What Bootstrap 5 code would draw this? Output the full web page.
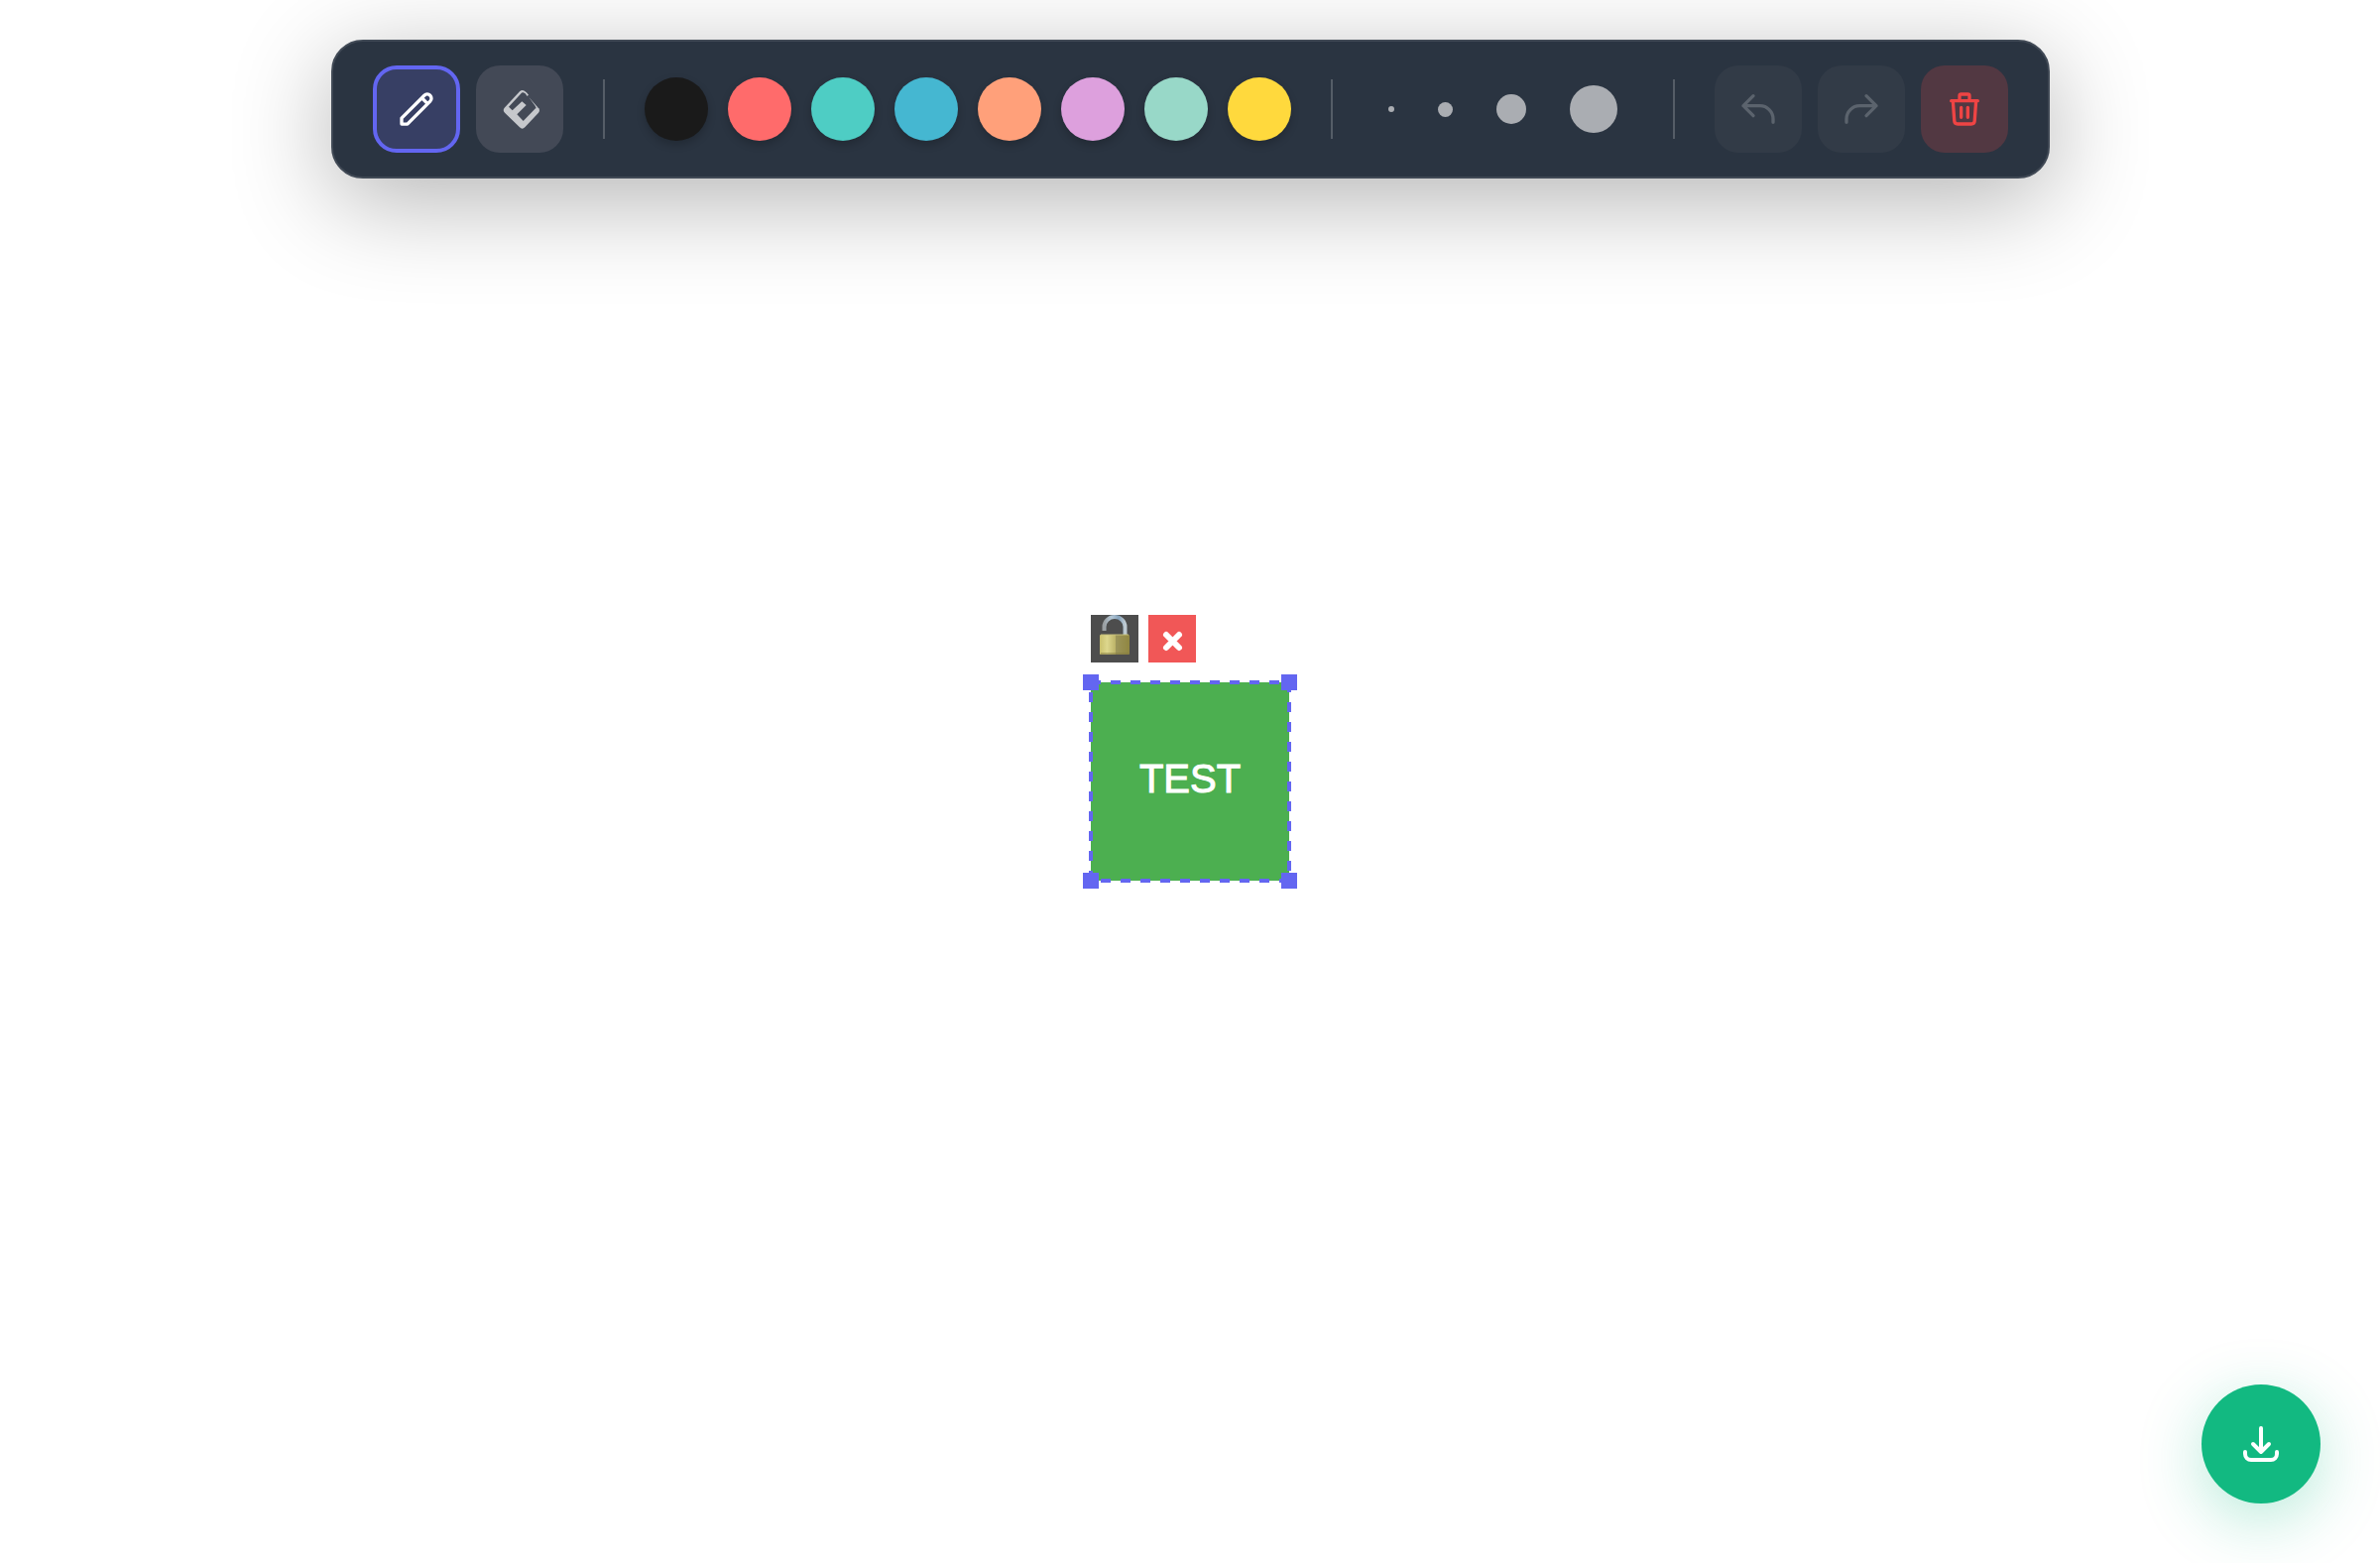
<!DOCTYPE html>
<html lang="en">
<head>
<meta charset="utf-8">
<meta name="viewport" content="width=device-width, initial-scale=1">
<title>Drawing board</title>
<link href="https://cdn.jsdelivr.net/npm/bootstrap@5.3.0/dist/css/bootstrap.min.css" rel="stylesheet">
<style>
  body { font-family: "Liberation Sans", Arial, sans-serif; background: #fff; }
  .toolbox {
    padding: 24px 40px; gap: 40px; border-radius: 32px;
    background: #2a3441; border: 2px solid #404955;
    box-shadow: 0 22px 100px rgba(0, 0, 0, .3);
  }
  .toolbox .sep { width: 2px; height: 60px; background: #555d67; }
  .tools { gap: 16px; }
  .tool {
    width: 88px; height: 88px; padding: 0; border: 0; border-radius: 24px;
    background: #434956; color: #c6c8cc;
  }
  .tool svg { width: 40px; height: 40px; }
  .tool.active { background: #373f64; border: 4px solid #6366f1; color: #fff; }
  .tool:disabled { background: #323b47; color: #5b636d; }
  .tool.danger { background: #523842; color: #ef4444; }
  .swatches { gap: 20px; }
  .swatch {
    width: 64px; height: 64px; padding: 0; border: 0; border-radius: 50%;
    box-shadow: 0 4px 8px rgba(0, 0, 0, .2);
  }
  .sizes { gap: 12px; }
  .size { padding: 16px; border: 0; background: none; }
  .size span { display: block; border-radius: 50%; background: #aaadb2; }
  .s-xs { width: 6px; height: 6px; }
  .s-sm { width: 15px; height: 15px; }
  .s-md { width: 30px; height: 30px; }
  .s-lg { width: 48px; height: 48px; }
  .board-item {
    width: 200px; height: 200px; padding-bottom: 6px; background: #4caf50; color: #fff;
    font-size: 40px; line-height: 48px; -webkit-text-stroke: 1px #fff;
  }
  .outline-layer { position: absolute; left: 0; top: 0; width: 100%; height: 100%; overflow: visible; }
  .item-actions { position: absolute; left: 0; bottom: 220px; gap: 10px; }
  .item-actions button { width: 48px; height: 48px; padding: 0; border: 0; }
  .item-actions svg { display: block; width: 48px; height: 48px; }
  .lock-btn { background: #4d4d4d; }
  .remove-btn { background: #f15757; }
  .save-btn {
    right: 60px; bottom: 60px; width: 120px; height: 120px; padding: 0; border: 0;
    background: #12b981; color: #fff; box-shadow: 0 16px 64px rgba(16, 185, 129, .3);
  }
  .save-btn svg { width: 48px; height: 48px; }
  .line-icon { fill: none; stroke: currentColor; stroke-width: 2; stroke-linecap: round; stroke-linejoin: round; }
</style>
</head>
<body class="vh-100 overflow-hidden">

<header class="fixed-top d-flex justify-content-center pt-4 mt-3">
  <div class="toolbox d-flex align-items-center" role="toolbar" aria-label="Drawing tools">
    <div class="tools d-flex">
      <button type="button" class="tool active d-flex align-items-center justify-content-center" aria-label="Pencil">
        <svg class="line-icon" viewBox="0 0 24 24"><path d="M15.232 5.232l3.536 3.536m-2.036-5.036a2.5 2.5 0 113.536 3.536L6.5 21.036H3v-3.572L16.732 3.732z"/></svg>
      </button>
      <button type="button" class="tool d-flex align-items-center justify-content-center" aria-label="Eraser">
        <svg viewBox="0 0 120 120" fill="currentColor" overflow="visible">
          <path d="M60 7Q67 0 75 5Q82 9 87 17L83 21Q77 10 71 10Q67 9 63 14L27 53L38 64L67 37L80 48L52 76L71 96L108 58L117 57Q123 64 117 71L76 115Q68 123 60 115L15 71Q8 64 14 56Z"/>
          <path d="M88 24L120 61L110 61Q111 56 107 50Z"/>
        </svg>
      </button>
    </div>
    <div class="sep"></div>
    <div class="swatches d-flex">
      <button type="button" class="swatch" style="background:#1a1a1a" aria-label="Black"></button>
      <button type="button" class="swatch" style="background:#ff6b6b" aria-label="Red"></button>
      <button type="button" class="swatch" style="background:#4ecdc4" aria-label="Teal"></button>
      <button type="button" class="swatch" style="background:#45b7d1" aria-label="Blue"></button>
      <button type="button" class="swatch" style="background:#ffa07a" aria-label="Salmon"></button>
      <button type="button" class="swatch" style="background:#dda0dd" aria-label="Plum"></button>
      <button type="button" class="swatch" style="background:#98d8c8" aria-label="Mint"></button>
      <button type="button" class="swatch" style="background:#ffd93d" aria-label="Yellow"></button>
    </div>
    <div class="sep"></div>
    <div class="sizes d-flex align-items-center">
      <button type="button" class="size" aria-label="Fine brush"><span class="s-xs"></span></button>
      <button type="button" class="size" aria-label="Small brush"><span class="s-sm"></span></button>
      <button type="button" class="size" aria-label="Medium brush"><span class="s-md"></span></button>
      <button type="button" class="size" aria-label="Large brush"><span class="s-lg"></span></button>
    </div>
    <div class="sep"></div>
    <div class="tools d-flex">
      <button type="button" class="tool d-flex align-items-center justify-content-center" disabled aria-label="Undo">
        <svg class="line-icon" viewBox="0 0 24 24"><path d="M3 10h10a8 8 0 018 8v2M3 10l6 6m-6-6l6-6"/></svg>
      </button>
      <button type="button" class="tool d-flex align-items-center justify-content-center" disabled aria-label="Redo">
        <svg class="line-icon" viewBox="0 0 24 24"><path d="M21 10H11a8 8 0 00-8 8v2m18-10l-6 6m6-6l-6-6"/></svg>
      </button>
      <button type="button" class="tool danger d-flex align-items-center justify-content-center" aria-label="Clear board">
        <svg class="line-icon" viewBox="0 0 24 24"><path d="M19 7l-.867 12.142A2 2 0 0116.138 21H7.862a2 2 0 01-1.995-1.858L5 7m5 4v6m4-6v6m1-10V4a1 1 0 00-1-1h-4a1 1 0 00-1 1v3M4 7h16"/></svg>
      </button>
    </div>
  </div>
</header>

<main class="h-100 d-flex align-items-center justify-content-center">
  <div class="board-item position-relative d-flex align-items-center justify-content-center">
    <span>TEST</span>
    <svg class="outline-layer" viewBox="0 0 200 200" aria-hidden="true">
      <rect width="200" height="200" fill="none" stroke="#6366f1" stroke-width="4" stroke-dasharray="10 10"/>
      <g fill="#6366f1">
        <rect x="-8" y="-8" width="16" height="16"/><rect x="192" y="-8" width="16" height="16"/>
        <rect x="-8" y="192" width="16" height="16"/><rect x="192" y="192" width="16" height="16"/>
      </g>
    </svg>
    <div class="item-actions d-flex">
      <button type="button" class="lock-btn" aria-label="Lock item">
        <svg viewBox="0 0 48 48">
          <defs>
            <linearGradient id="brass"><stop offset="0" stop-color="#c9c06d"/><stop offset=".25" stop-color="#ddd78d"/><stop offset=".52" stop-color="#bdb469"/><stop offset=".55" stop-color="#9c955a"/><stop offset="1" stop-color="#908641"/></linearGradient>
            <linearGradient id="steel"><stop offset="0" stop-color="#9a9fa2"/><stop offset=".35" stop-color="#b3c7d6"/><stop offset=".7" stop-color="#86a3bc"/><stop offset="1" stop-color="#bfcbd2"/></linearGradient>
          </defs>
          <path d="M13.500 16V12A10.500 10 0 0 1 34.500 12V20" fill="none" stroke="url(#steel)" stroke-width="4"/>
          <rect x="9" y="20" width="30" height="20" rx="1" fill="url(#brass)"/>
          <path d="M10 20H38" stroke="#c5bf7d" stroke-width="1"/>
          <path d="M10 39H38" stroke="#837b40" stroke-width="1"/>
        </svg>
      </button>
      <button type="button" class="remove-btn" aria-label="Remove item">
        <svg viewBox="0 0 48 48"><path d="M18 20L31 33M31 20L18 33" stroke="#fff" stroke-width="6" stroke-linecap="round"/></svg>
      </button>
    </div>
  </div>
</main>

<button type="button" class="save-btn position-fixed rounded-circle d-flex align-items-center justify-content-center" aria-label="Download drawing">
  <svg class="line-icon" viewBox="0 0 24 24"><path d="M4 16v1a3 3 0 003 3h10a3 3 0 003-3v-1m-4-4l-4 4m0 0l-4-4m4 4V4"/></svg>
</button>

<script src="https://cdn.jsdelivr.net/npm/bootstrap@5.3.0/dist/js/bootstrap.bundle.min.js"></script>
</body>
</html>
